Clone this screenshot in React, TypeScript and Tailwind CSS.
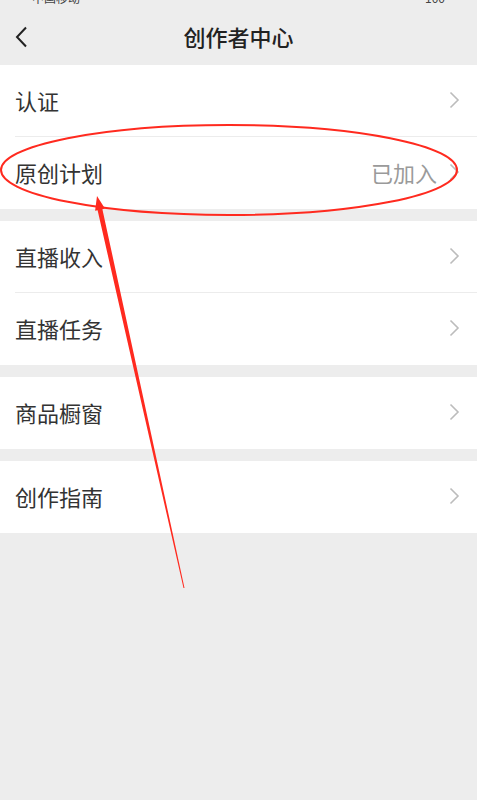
import React from "react";

const font = { fontFamily: '"Noto Sans CJK SC", "Noto Sans", sans-serif' };

function Chevron() {
  return (
    <svg width="11" height="18" viewBox="0 0 11 18" className="shrink-0">
      <path d="M1.5 1.5 L9 9 L1.5 16.5" fill="none" stroke="#bcbcbc" strokeWidth="1.6" />
    </svg>
  );
}

function Row({ label, value, divider }: { label: string; value?: string; divider?: boolean }) {
  return (
    <div className="relative flex h-[72px] items-center bg-white pb-[2px] pl-[15px] pr-[17px]">
      <span className="flex-1 text-[22px] text-[#333333]">{label}</span>
      {value && <span className="mr-[12px] text-[22px] text-[#9a9a9a]">{value}</span>}
      <Chevron />
      {divider && <div className="absolute bottom-0 left-[15px] right-0 h-px bg-[#ececec]" />}
    </div>
  );
}

export default function App() {
  return (
    <div className="relative min-h-[800px] w-[477px] overflow-hidden bg-[#ededed]" style={font}>
      <header className="flex h-[65px] flex-col bg-[#ededed]">
        <div className="h-[8px] overflow-hidden">
          <div className="-mt-[8px] flex justify-between px-[32px] text-[12px] leading-[12px] text-[#444]">
            <span>中国移动</span>
            <span>100</span>
          </div>
        </div>
        <div className="relative flex flex-1 items-center justify-center">
          <svg width="13" height="22" viewBox="0 0 13 22" className="absolute left-[15px]">
            <path d="M11 1.5 L2 11 L11 20.5" fill="none" stroke="#222" strokeWidth="2" />
          </svg>
          <span className="text-[22px] font-medium text-[#222]">创作者中心</span>
        </div>
      </header>

      <div className="flex flex-col gap-[12px]">
        <div>
          <Row label="认证" divider />
          <Row label="原创计划" value="已加入" />
        </div>
        <div>
          <Row label="直播收入" divider />
          <Row label="直播任务" />
        </div>
        <Row label="商品橱窗" />
        <Row label="创作指南" />
      </div>

      <svg className="pointer-events-none absolute left-0 top-0" width="477" height="800" viewBox="0 0 477 800">
        <ellipse cx="229" cy="170" rx="228" ry="45" fill="none" stroke="#ff2a1f" strokeWidth="2" />
        <polygon points="97,196 104.9,208.6 102.4,209.2 184.5,587.9 183.5,588.1 97.6,210.2 95.1,210.8" fill="#ff2a1f" />
      </svg>
    </div>
  );
}
